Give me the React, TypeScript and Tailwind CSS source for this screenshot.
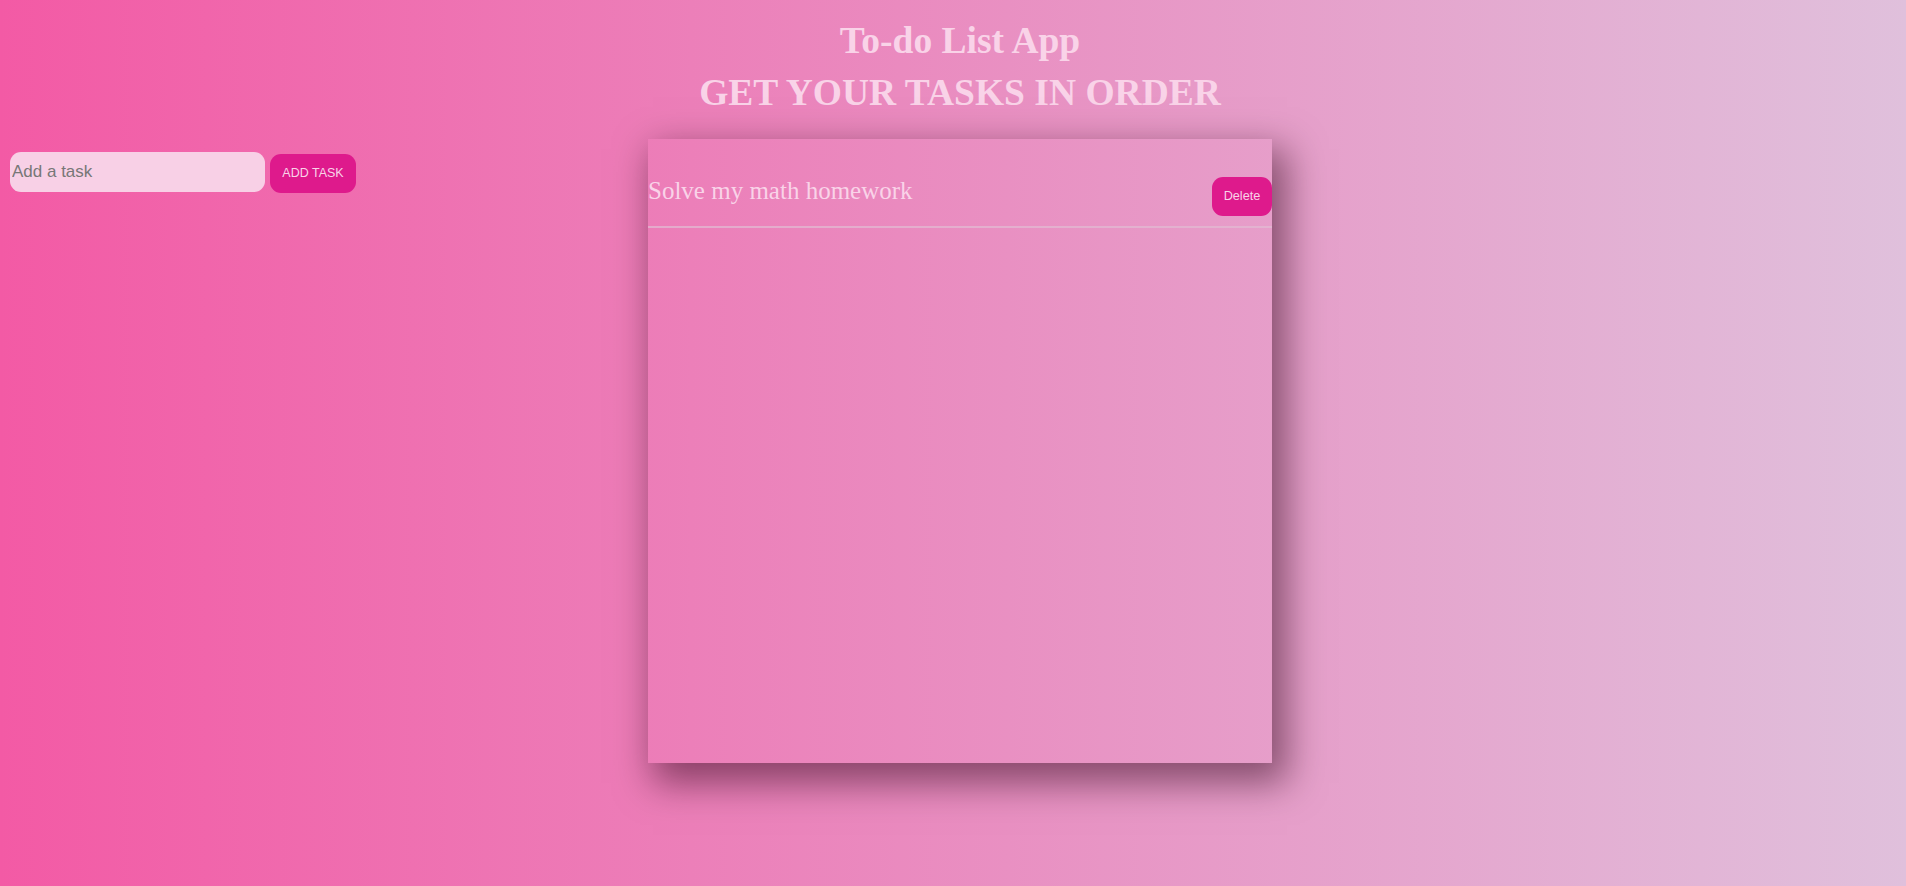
import React, { useState } from 'react'

type Task = {
  id: number
  text: string
}

function TaskRow({ task, onDelete }: { task: Task; onDelete: (id: number) => void }) {
  return (
    <li className="flex h-[89px] items-start justify-between border-b-2 border-[rgba(225,185,210,0.75)] pt-[37px]">
      <span className="font-['Liberation_Serif',serif] text-[25px] leading-[29px] text-[#f9d3e8]">
        {task.text}
      </span>
      <button
        onClick={() => onDelete(task.id)}
        className="mt-[1px] h-[39px] w-[60px] rounded-[11px] bg-[#de1a8c] font-['Liberation_Sans',Arial,sans-serif] text-[12.7px] text-[#f9d3e8]"
      >
        Delete
      </button>
    </li>
  )
}

export default function App() {
  const [tasks, setTasks] = useState<Task[]>([{ id: 1, text: 'Solve my math homework' }])
  const [value, setValue] = useState('')

  const addTask = () => {
    if (!value.trim()) return
    setTasks([...tasks, { id: Date.now(), text: value.trim() }])
    setValue('')
  }

  return (
    <div className="min-h-screen w-full overflow-hidden bg-[linear-gradient(to_right,#f35aa5,#e0c0dc)]">
      <header className="pl-[14px] pt-[15px] text-center font-['Liberation_Serif',serif] text-[37.5px] font-bold leading-[52px] text-[#f9d3e8]">
        <h1>To-do List App</h1>
        <h2>GET YOUR TASKS IN ORDER</h2>
      </header>

      <div className="mt-[20px] grid grid-cols-[648px_624px_1fr]">
        <div className="flex items-start gap-[5px] pl-[10px] pt-[13px]">
          <input
            value={value}
            onChange={(e) => setValue(e.target.value)}
            placeholder="Add a task"
            className="h-[40px] w-[255px] rounded-[11px] bg-[#f8d0e6] px-[2px] font-['Liberation_Sans',Arial,sans-serif] text-[17px] text-[#555] outline-none placeholder:text-[#777]"
          />
          <button
            onClick={addTask}
            className="mt-[2px] h-[39px] w-[86px] rounded-[11px] bg-[#de1a8c] font-['Liberation_Sans',Arial,sans-serif] text-[12.5px] text-[#f9d3e8]"
          >
            ADD TASK
          </button>
        </div>

        <ul className="h-[624px] w-[624px] shadow-[10px_15px_35px_5px_rgba(40,0,20,0.5)]">
          {tasks.map((t) => (
            <TaskRow key={t.id} task={t} onDelete={(id) => setTasks(tasks.filter((x) => x.id !== id))} />
          ))}
        </ul>

        <div />
      </div>
    </div>
  )
}
